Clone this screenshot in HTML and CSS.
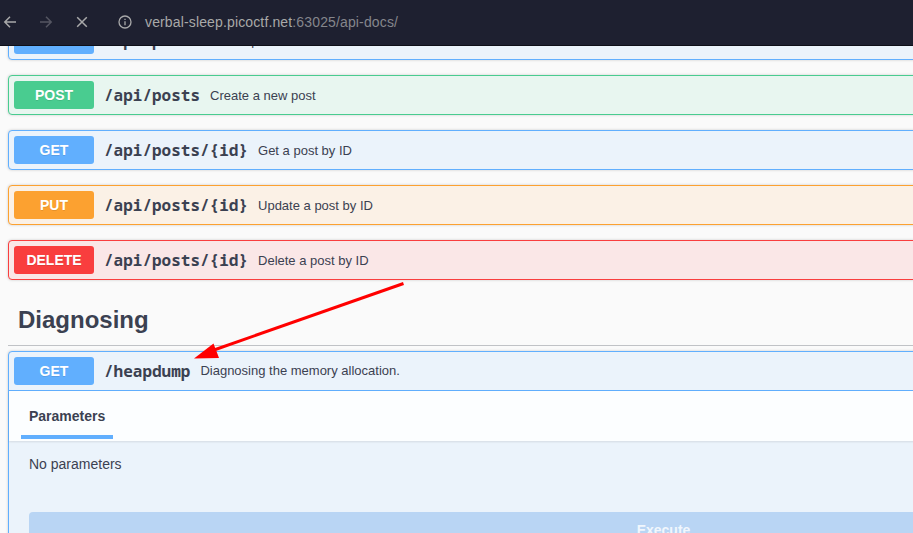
FILE: index.html
```html
<!DOCTYPE html>
<html lang="en">
<head>
<meta charset="utf-8">
<title>API docs</title>
<link rel="stylesheet" href="styles.css">
</head>
<body>
<header class="toolbar">
  <svg class="icon back" viewBox="0 0 14 14"><path d="M13 7H2M7 1.8L1.8 7L7 12.2"/></svg>
  <svg class="icon forward" viewBox="0 0 14 14"><path d="M1 7H12M7 1.8L12.2 7L7 12.2"/></svg>
  <svg class="icon stop" viewBox="0 0 14 14"><path d="M2.2 2.2L11.8 11.8M11.8 2.2L2.2 11.8"/></svg>
  <svg class="icon info" viewBox="0 0 14 14"><circle cx="7" cy="7" r="6"/><path d="M7 6.2V10.2M7 3.7V5.1"/></svg>
  <div class="url">verbal-sleep.picoctf.net<span class="dim">:63025/api-docs/</span></div>
</header>
<main class="viewport">
  <div class="docs">
    <section class="op get"><div class="summary"><span class="method">GET</span><span class="path">/api/posts</span><span class="desc">Get all posts</span></div></section>
    <section class="op post"><div class="summary"><span class="method">POST</span><span class="path">/api/posts</span><span class="desc">Create a new post</span></div></section>
    <section class="op get"><div class="summary"><span class="method">GET</span><span class="path">/api/posts/{id}</span><span class="desc">Get a post by ID</span></div></section>
    <section class="op put"><div class="summary"><span class="method">PUT</span><span class="path">/api/posts/{id}</span><span class="desc">Update a post by ID</span></div></section>
    <section class="op delete"><div class="summary"><span class="method">DELETE</span><span class="path">/api/posts/{id}</span><span class="desc">Delete a post by ID</span></div></section>
    <h3 class="tag">Diagnosing</h3>
    <section class="op get open">
      <div class="summary"><span class="method">GET</span><span class="path">/heapdump</span><span class="desc">Diagnosing the memory allocation.</span></div>
      <div class="tabs"><h4 class="tab">Parameters</h4></div>
      <p class="empty">No parameters</p>
      <div class="execute">Execute</div>
    </section>
  </div>
</main>
<svg class="arrow" viewBox="0 0 220 84"><path class="shaft" d="M213.5 5.5L24 72"/><path class="head" d="M4 80.5L23.5 65.5L29 80Z"/></svg>
</body>
</html>
```
FILE: styles.css
```css
* { box-sizing: border-box; }
body {
  margin: 0;
  height: 533px;
  overflow: hidden;
  display: flex;
  flex-direction: column;
  background: #fafafa;
  color: #3b4151;
  font-family: "Liberation Sans", Arial, sans-serif;
}
.toolbar {
  flex: none;
  height: 46px;
  padding: 0 0 2px 3px;
  display: flex;
  align-items: center;
  background: #1e2030;
  border-bottom: 1px solid #0e0f18;
}
.icon {
  width: 14px;
  height: 14px;
  fill: none;
  stroke: #a9a9aa;
  stroke-width: 1.5;
}
.forward { margin-left: 22px; stroke: #555662; }
.stop { margin-left: 22px; }
.info { margin-left: 29px; stroke-width: 1.3; }
.url {
  margin-left: 13px;
  font-size: 14px;
  line-height: 20px;
  letter-spacing: 0.14px;
  color: #a9a9a8;
}
.dim { color: #85868c; }
.viewport { flex: 1; overflow: hidden; }
.docs { width: 1311px; margin: -26px 0 0 8px; }
.op {
  height: 40px;
  margin-bottom: 15px;
  border: 1px solid var(--accent);
  border-radius: 4px;
  background: var(--tint);
  box-shadow: 0 0 3px rgba(0, 0, 0, .19);
}
.get { --accent: #61affe; --tint: #ebf3fb; }
.post { --accent: #49cc90; --tint: #e8f6f0; }
.put { --accent: #fca130; --tint: #fbf1e6; }
.delete { --accent: #f93e3e; --tint: #fae7e7; }
.summary {
  height: 38px;
  padding: 0 5px;
  display: flex;
  align-items: center;
}
.method {
  width: 80px;
  height: 28px;
  border-radius: 3px;
  background: var(--accent);
  color: #fff;
  font-size: 14px;
  font-weight: 700;
  line-height: 28px;
  text-align: center;
  text-shadow: 0 1px 0 rgba(0, 0, 0, .1);
}
.path {
  margin-left: 10px;
  font: 700 16px/20px "Noto Sans Mono", "DejaVu Sans Mono", monospace;
}
.desc { margin-left: 10px; padding-top: 1px; font-size: 13px; line-height: 16px; }
.tag {
  height: 51px;
  margin: 0 0 5px;
  padding-left: 10px;
  border-bottom: 1px solid rgba(59, 65, 81, .3);
  font-size: 24px;
  line-height: 50px;
}
.open { height: 300px; }
.open .summary { height: 39px; border-bottom: 1px solid var(--accent); }
.open .desc { padding-top: 0; }
.tabs {
  height: 50px;
  padding-left: 12px;
  display: flex;
  background: rgba(255, 255, 255, .85);
  box-shadow: 0 1px 2px rgba(0, 0, 0, .1);
}
.tab {
  height: 48px;
  margin: 0;
  padding: 0 8px;
  border-bottom: 4px solid #61affe;
  font-size: 14px;
  line-height: 50px;
}
.empty { margin: 15px 20px 40px; font-size: 14px; line-height: 16px; }
.execute {
  height: 36px;
  margin: 0 20px;
  border-radius: 4px;
  background: #b9d5f4;
  color: #f1f7fd;
  font-size: 14px;
  font-weight: 700;
  line-height: 36px;
  text-align: center;
}
.arrow {
  position: absolute;
  left: 190px;
  top: 278px;
  width: 220px;
  height: 84px;
}
.shaft { fill: none; stroke: #f00; stroke-width: 3; }
.head { fill: #f00; }
```
